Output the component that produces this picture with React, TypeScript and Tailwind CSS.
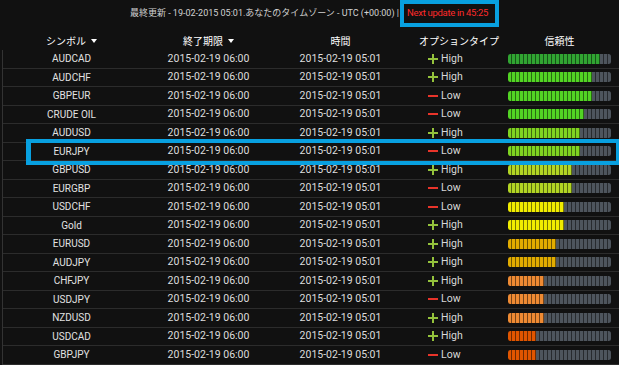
import React from "react";

type Row = { sym: string; high: boolean; fill: number; color: string };

const rows: Row[] = [
  { sym: "AUDCAD", high: true, fill: 23, color: "#31a532" },
  { sym: "AUDCHF", high: true, fill: 21, color: "#52d424" },
  { sym: "GBPEUR", high: false, fill: 21, color: "#52d424" },
  { sym: "CRUDE OIL", high: false, fill: 19, color: "#52d424" },
  { sym: "AUDUSD", high: true, fill: 18, color: "#7fd321" },
  { sym: "EURJPY", high: false, fill: 18, color: "#7fd321" },
  { sym: "GBPUSD", high: true, fill: 16, color: "#b2d424" },
  { sym: "EURGBP", high: false, fill: 16, color: "#b2d424" },
  { sym: "USDCHF", high: false, fill: 14, color: "#f0ec00" },
  { sym: "Gold", high: true, fill: 14, color: "#f0ec00" },
  { sym: "EURUSD", high: true, fill: 12, color: "#e2ac00" },
  { sym: "AUDJPY", high: true, fill: 12, color: "#e2ac00" },
  { sym: "CHFJPY", high: true, fill: 9, color: "#ee8a33" },
  { sym: "USDJPY", high: false, fill: 9, color: "#ee8a33" },
  { sym: "NZDUSD", high: true, fill: 9, color: "#ee8a33" },
  { sym: "USDCAD", high: true, fill: 7, color: "#e05500" },
  { sym: "GBPJPY", high: false, fill: 7, color: "#e05500" },
];

const SEGS = 26;

function Bar({ fill, color }: { fill: number; color: string }) {
  return (
    <div className="flex h-[10px] w-[103px] overflow-hidden rounded-[2.5px]">
      {Array.from({ length: SEGS }).map((_, i) => (
        <div
          key={i}
          className="h-full w-[4px] shrink-0 border-r border-black/50 last:border-r-0"
          style={{ backgroundColor: i < fill ? color : "#4e555d" }}
        />
      ))}
    </div>
  );
}

function Caret() {
  return (
    <svg width="6" height="4" viewBox="0 0 6 4" className="ml-[5px]">
      <path d="M0 0 H6 L3 4 Z" fill="#ffffff" />
    </svg>
  );
}

function Plus() {
  return (
    <svg width="10" height="10" viewBox="0 0 10 10">
      <rect x="0" y="4" width="10" height="2" fill="#94c23c" />
      <rect x="4" y="0" width="2" height="10" fill="#94c23c" />
    </svg>
  );
}

function Minus() {
  return (
    <svg width="10" height="10" viewBox="0 0 10 10">
      <rect x="0" y="4" width="10" height="2" fill="#e8342a" />
    </svg>
  );
}

export default function App() {
  return (
    <div className="h-[365px] w-[619px] overflow-hidden bg-[#111111] font-['Roboto','Noto_Sans_CJK_JP',sans-serif] text-[#dddddd]">
      {/* top line */}
      <div className="flex h-[32px] items-start">
        <div className="flex h-[27px] w-[400px] items-center justify-end pr-[1px] text-[9px] text-[#d2d2d2]">
          最終更新 - 19-02-2015 05:01.あなたのタイムゾーン - UTC (+00:00) |
        </div>
        <div className="flex h-[27px] w-[99px] items-center border-[4px] border-[#08a0e0] pl-[3px] text-[9.5px] tracking-[-0.3px] text-[#ff2a2a]">
          Next update in 45:25
        </div>
      </div>

      {/* header */}
      <div className="ml-[3px] grid h-[18px] grid-cols-[137px_137px_127px_104px_103px] items-center text-[10px] text-white">
        <div className="flex items-center justify-center">
          シンボル
          <Caret />
        </div>
        <div className="flex items-center justify-center">
          終了期限
          <Caret />
        </div>
        <div className="text-center">時間</div>
        <div className="pl-[6px] text-center">オプションタイプ</div>
        <div className="text-center">信頼性</div>
      </div>

      {/* rows */}
      <div className="ml-[2px] border-l border-[#333333]">
        {rows.map((r) => (
          <div
            key={r.sym}
            className="relative grid h-[18.5px] grid-cols-[137px_137px_127px_104px_1fr] items-center border-b border-[#2c2c2c]"
          >
            <div className="text-center text-[10px] text-[#e2e2e2]">{r.sym}</div>
            <div className="text-center text-[10.5px]">2015-02-19 06:00</div>
            <div className="text-center text-[10.5px]">2015-02-19 05:01</div>
            <div className="flex items-center gap-[3px] pl-[24px] text-[10.5px] text-[#d8d8d8]">
              {r.high ? <Plus /> : <Minus />}
              <span>{r.high ? "High" : "Low"}</span>
            </div>
            <div className="flex items-center">
              <Bar fill={r.fill} color={r.color} />
            </div>
            {r.sym === "EURJPY" && (
              <div className="pointer-events-none absolute -top-[4px] -bottom-[5px] left-[23px] -right-[1px] border-[4px] border-l-[5px] border-[#08a0e0]" />
            )}
          </div>
        ))}
      </div>
    </div>
  );
}
